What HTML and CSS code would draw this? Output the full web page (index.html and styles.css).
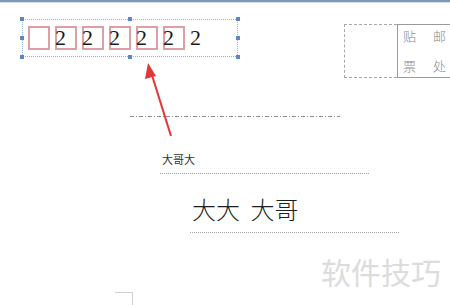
FILE: index.html
```html
<!DOCTYPE html>
<html lang="zh-CN">
<head>
    <meta charset="UTF-8">
    <title>信封</title>
    <link rel="stylesheet" href="styles.css">
</head>
<body>
    <div class="topbar"></div>
    <div class="page">
        <div class="header">
            <div class="selection">
                <div class="cells" lang="en">
                    <div class="cell"><span class="box"></span></div>
                    <div class="cell"><span class="box"></span><span class="digit">2</span></div>
                    <div class="cell"><span class="box"></span><span class="digit">2</span></div>
                    <div class="cell"><span class="box"></span><span class="digit">2</span></div>
                    <div class="cell"><span class="box"></span><span class="digit">2</span></div>
                    <div class="cell"><span class="box"></span><span class="digit">2</span></div>
                    <div class="cell"><span class="digit">2</span></div>
                </div>
                <span class="handle h-tl"></span>
                <span class="handle h-tc"></span>
                <span class="handle h-tr"></span>
                <span class="handle h-ml"></span>
                <span class="handle h-mr"></span>
                <span class="handle h-bl"></span>
                <span class="handle h-bc"></span>
                <span class="handle h-br"></span>
            </div>
            <div class="stamp">
                <div class="stamp-slot"></div>
                <div class="stamp-label">
                    <span>贴</span><span>邮</span>
                    <span>票</span><span>处</span>
                </div>
            </div>
        </div>

        <div class="rule rule-dashdot"></div>
        <div class="small-name">大哥大</div>
        <div class="rule rule-dotted rule-two"></div>
        <div class="big-name">大大&nbsp;&nbsp;大哥</div>
        <div class="rule rule-dotted rule-three"></div>
        <div class="corner"></div>

        <svg class="arrow" width="40" height="85" viewBox="0 0 40 85">
            <line x1="31" y1="78" x2="11" y2="14" stroke="#e2383a" stroke-width="2"/>
            <polygon points="8,5 5,21 16,18" fill="#e2383a"/>
        </svg>
        <div class="watermark">软件技巧</div>
    </div>
</body>
</html>
```

FILE: styles.css
```css
html, body {
    margin: 0;
    padding: 0;
    background: #fff;
    overflow: hidden;
}

body {
    font-family: "Liberation Serif", "Noto Sans CJK SC", serif;
    color: #222;
}

.topbar {
    height: 2px;
    background: #7d98ba;
    border-bottom: 1px solid #d4dfeb;
}

.page {
    position: relative;
    height: 302px;
}

.header {
    display: flex;
    align-items: flex-start;
    height: 75px;
}

.selection {
    position: relative;
    flex-shrink: 0;
    margin: 16px 0 0 22px;
    width: 214px;
    height: 36px;
    border: 1px dotted #8fb0e0;
}

.cells {
    display: flex;
    padding: 6px 0 0 5px;
}

.cell {
    display: grid;
    width: 27px;
}

.box,
.digit {
    grid-area: 1 / 1;
}

.box {
    width: 18px;
    height: 20px;
    border: 2px solid #df9ea3;
}

.digit {
    font-family: "Liberation Serif", "DejaVu Serif", serif;
    font-size: 22px;
    line-height: 24px;
    color: #1a1a1a;
}

.handle {
    position: absolute;
    width: 4px;
    height: 4px;
    background: #5e86c4;
}

.h-tl { left: -3px; top: -3px; }
.h-tc { left: 105px; top: -3px; }
.h-tr { right: -3px; top: -3px; }
.h-ml { left: -3px; top: 16px; }
.h-mr { right: -3px; top: 16px; }
.h-bl { left: -3px; bottom: -3px; }
.h-bc { left: 105px; bottom: -3px; }
.h-br { right: -3px; bottom: -3px; }

.stamp {
    display: flex;
    flex-shrink: 0;
    margin: 21px 0 0 106px;
}

.stamp-slot {
    width: 52px;
    height: 52px;
    border: 1px dashed #a8a8a8;
    border-right: none;
}

.stamp-label {
    display: grid;
    grid-template-columns: 14px 14px;
    grid-auto-rows: 30px;
    column-gap: 16px;
    width: 70px;
    height: 54px;
    padding: 2px 0 0 5px;
    box-sizing: border-box;
    border: 1px solid #9a9a9a;
    border-right: none;
    font-family: "Noto Sans CJK SC", sans-serif;
    font-weight: 300;
    font-size: 13px;
    line-height: 18px;
    color: #8a8a8a;
}

.rule {
    height: 1px;
}

.rule-dashdot {
    margin: 38px 0 0 130px;
    width: 210px;
    background: repeating-linear-gradient(to right, #8c8c8c 0 4px, transparent 4px 6px, #8c8c8c 6px 7px, transparent 7px 9px);
}

.rule-dotted {
    background: repeating-linear-gradient(to right, #a0a0a0 0 1px, transparent 1px 2px);
}

.small-name {
    margin: 36px 0 0 162px;
    font-family: "Noto Sans CJK SC", sans-serif;
    font-size: 11px;
    line-height: 12px;
    color: #333;
}

.rule-two {
    margin: 8px 0 0 160px;
    width: 210px;
}

.big-name {
    margin: 21px 0 0 192px;
    font-family: "Noto Sans CJK SC", sans-serif;
    font-weight: 300;
    font-size: 24px;
    line-height: 28px;
    color: #1e1e1e;
}

.rule-three {
    margin: 9px 0 0 190px;
    width: 210px;
}

.corner {
    margin: 59px 0 0 115px;
    width: 17px;
    height: 20px;
    border-top: 1px solid #d0d0d0;
    border-right: 1px solid #d0d0d0;
}

.arrow {
    position: absolute;
    left: 140px;
    top: 55px;
}

.watermark {
    position: absolute;
    left: 321px;
    top: 250px;
    font-family: "Noto Sans CJK SC", sans-serif;
    font-size: 30px;
    line-height: 36px;
    color: #dcdcdc;
}
```
